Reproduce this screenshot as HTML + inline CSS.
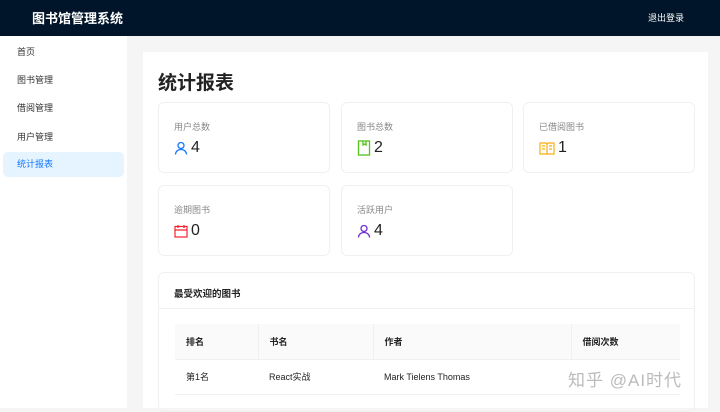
<!DOCTYPE html><html><head><meta charset="utf-8"><style>
*{margin:0;padding:0;box-sizing:border-box}
body{width:720px;height:408px;overflow:hidden;font-family:"Liberation Sans","Noto Sans CJK SC",sans-serif;background:#f5f5f5;position:relative;color:#222}
.hd{position:absolute;left:0;top:0;width:720px;height:36px;background:#001529;color:#fff}
.hd .t{position:absolute;left:32px;top:8px;font-size:13px;font-weight:bold}
.hd .o{position:absolute;left:648px;top:11px;font-size:9px}
.sb{position:absolute;left:0;top:36px;width:127px;height:372px;background:#fff}
.sb div{position:absolute;left:3px;width:121px;height:25px;line-height:25px;padding-left:14px;font-size:9px;color:#333;border-radius:5px}
.sb .a{background:#e6f4ff;color:#1677ff}
.main{position:absolute;left:143px;top:52px;width:565px;height:356px;background:#fff}
.tt{position:absolute;left:158px;top:68px;font-size:19px;font-weight:bold}
.c{position:absolute;width:172px;height:71px;border:1px solid #f0f0f0;border-radius:6px;background:#fff}
.c .l{position:absolute;left:15px;top:17px;font-size:9px;color:#888}
.c .v{position:absolute;left:15px;top:36px;font-size:16px;display:flex;align-items:center;gap:3px}
.pc{position:absolute;left:158px;top:272px;width:537px;height:140px;border:1px solid #f0f0f0;border-radius:6px}
.pc .h{position:absolute;left:15px;top:13px;font-size:9.5px;font-weight:bold}
.pc .d{position:absolute;left:0;top:35px;width:100%;border-top:1px solid #f0f0f0}
table{position:absolute;left:16px;top:51px;width:505px;border-collapse:collapse;font-size:9px}
td{height:35px;padding-left:11px;border-bottom:1px solid #f0f0f0}
tr.hr td{background:#fafafa;font-weight:bold;border-right:1px solid #f0f0f0}
.wm{position:absolute;left:568px;top:366px;font-size:17px;color:#bbb;letter-spacing:1px}
</style></head><body>
<div class="hd"><span class="t">图书馆管理系统</span><span class="o">退出登录</span></div>
<div class="sb"><div style="top:4px">首页</div><div style="top:32px">图书管理</div><div style="top:60px">借阅管理</div><div style="top:89px">用户管理</div><div class="a" style="top:116px">统计报表</div></div>
<div class="main"></div>
<div class="tt">统计报表</div>
<div class="c" style="left:158px;top:102px"><span class="l">用户总数</span><span class="v"><svg width="14" height="14" viewBox="0 0 14 14" fill="none" stroke="#1677ff" stroke-width="1.3"><circle cx="7" cy="4.5" r="3"/><path d="M1.5 13.5c0-3 2.5-5 5.5-5s5.5 2 5.5 5"/></svg>4</span></div>
<div class="c" style="left:341px;top:102px"><span class="l">图书总数</span><span class="v"><svg width="14" height="16" viewBox="0 0 14 16" fill="none" stroke="#52c41a" stroke-width="1.3"><rect x="1.5" y="1" width="11" height="14"/><path d="M6 1v4l1.5-1 1.5 1V1"/></svg>2</span></div>
<div class="c" style="left:523px;top:102px"><span class="l">已借阅图书</span><span class="v"><svg width="16" height="13" viewBox="0 0 16 13" fill="none" stroke="#faad14" stroke-width="1.2"><path d="M1 1h6l1 1 1-1h6v11H1z M8 2v10 M3 4h3M3 7h3M10 4h3M10 7h3"/></svg>1</span></div>
<div class="c" style="left:158px;top:185px"><span class="l">逾期图书</span><span class="v"><svg width="14" height="14" viewBox="0 0 14 14" fill="none" stroke="#f5222d" stroke-width="1.2"><rect x="1" y="2.5" width="12" height="10.5"/><path d="M1 6h12M4 1v3M10 1v3"/></svg>0</span></div>
<div class="c" style="left:341px;top:185px"><span class="l">活跃用户</span><span class="v"><svg width="14" height="14" viewBox="0 0 14 14" fill="none" stroke="#722ed1" stroke-width="1.3"><circle cx="7" cy="4.5" r="3"/><path d="M1.5 13.5c0-3 2.5-5 5.5-5s5.5 2 5.5 5"/></svg>4</span></div>
<div class="pc"><span class="h">最受欢迎的图书</span><div class="d"></div>
<table><tr class="hr"><td style="width:83px">排名</td><td style="width:115px">书名</td><td style="width:198px">作者</td><td style="border-right:0">借阅次数</td></tr>
<tr><td>第1名</td><td>React实战</td><td>Mark Tielens Thomas</td><td></td></tr></table></div>
<div class="wm">知乎 @AI时代</div>
</body></html>
